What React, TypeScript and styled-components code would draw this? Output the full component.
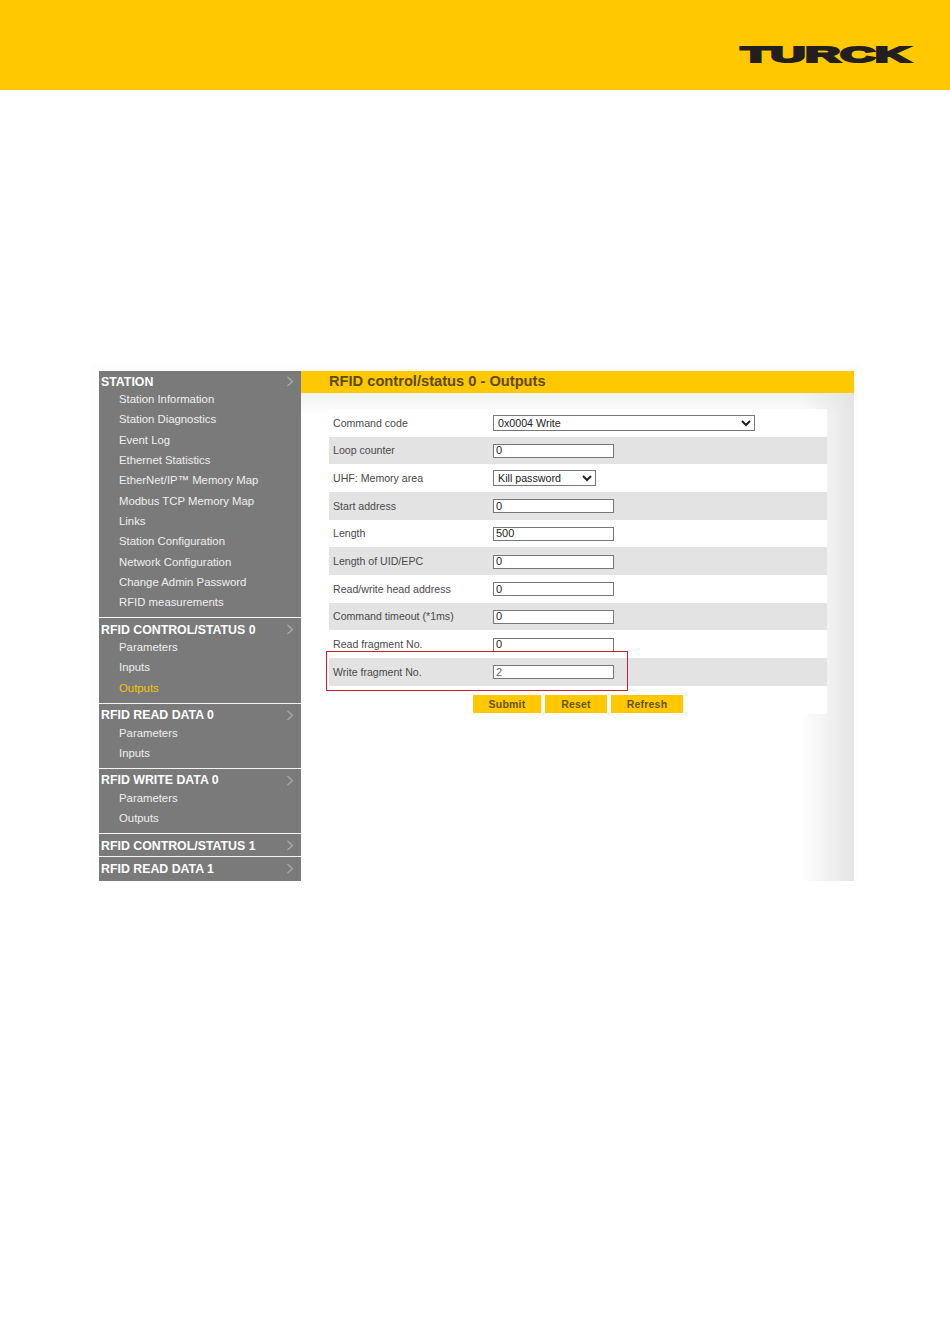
import React from "react";
import styled, { createGlobalStyle } from "styled-components";

const GlobalStyle = createGlobalStyle`
  html, body {
    margin: 0;
    padding: 0;
    background: #fff;
    font-family: "Liberation Sans", Arial, sans-serif;
  }
`;

const PageHeader = styled.header`
  height: 90px;
  background: #ffc800;
  display: flex;
  justify-content: flex-end;
  align-items: flex-start;
  padding: 44px 36px 0 0;
  box-sizing: border-box;
`;

const Logo = styled.svg`
  width: 176px;
  height: 22px;
  display: block;
  overflow: visible;
`;

const Figure = styled.div`
  width: 768px;
  height: 518px;
  margin: 273px 0 0 91px;
  padding: 8px 5px 0 8px;
  box-sizing: border-box;
  background: #fdfdfd;
  display: flex;
`;

const Sidebar = styled.nav`
  width: 202px;
  flex: none;
  display: flex;
  flex-direction: column;
`;

const Section = styled.div<{ $first?: boolean }>`
  background: #7a7a7a;
  border-bottom: 1px solid #f4f4f4;
  padding-top: ${(p) => (p.$first ? 0.5 : 1.5)}px;
  &:last-child {
    border-bottom: none;
    flex: 1;
  }
`;

const SectionHead = styled.div`
  height: 20px;
  padding: 0 7px 0 2px;
  display: flex;
  align-items: center;
  justify-content: space-between;
  color: #fff;
  font-size: 12.35px;
  font-weight: bold;
`;

const Chevron = styled.svg`
  width: 8px;
  height: 11px;
  fill: none;
  stroke: #a9a9a9;
  stroke-width: 1.3;
`;

const ItemList = styled.ul<{ $first?: boolean }>`
  list-style: none;
  margin: -2.5px 0 0;
  padding: 0 0 ${(p) => (p.$first ? 4.3 : 4.6)}px 20px;
`;

const Item = styled.li<{ $active?: boolean }>`
  height: 20.35px;
  line-height: 20.35px;
  font-size: 11.35px;
  color: ${(p) => (p.$active ? "#f5c400" : "#efefef")};
`;

const CollapsedGap = styled.div`
  height: 0.5px;
`;

const Content = styled.main`
  flex: 1;
  display: flex;
  flex-direction: column;
`;

const TitleBar = styled.h1`
  margin: 0;
  height: 22px;
  line-height: 21px;
  padding-left: 28px;
  background: #ffc800;
  color: #5c4a12;
  font-size: 14.67px;
  font-weight: bold;
`;

const ContentBody = styled.div`
  flex: 1;
  padding: 16px 0 0 28px;
  background:
    linear-gradient(to right, rgba(228, 228, 228, 0) 500px, #e4e4e4 100%),
    linear-gradient(to bottom, #f1f1f1, #ffffff 22px);
`;

const FormPanel = styled.form`
  position: relative;
  width: 498px;
  background: #fff;
`;

const FormRow = styled.div<{ $shaded: boolean }>`
  height: 27.67px;
  padding-left: 4px;
  display: grid;
  grid-template-columns: 160px 1fr;
  align-items: center;
  background: ${(p) => (p.$shaded ? "#e3e3e3" : "#fff")};
`;

const Label = styled.label`
  font-size: 10.6px;
  color: #4a4a4a;
`;

const FieldCell = styled.div`
  display: flex;
  align-items: center;
`;

const TextInput = styled.input<{ $muted?: boolean }>`
  width: 121px;
  height: 14px;
  box-sizing: border-box;
  margin: 1px 0 0;
  padding: 0 2px 1px;
  border: 1px solid #777;
  border-radius: 0;
  outline: none;
  background: #fff;
  font-family: inherit;
  font-size: 11px;
  color: ${(p) => (p.$muted ? "#666" : "#222")};
`;

const Select = styled.select<{ $wide?: boolean }>`
  width: ${(p) => (p.$wide ? 262 : 103)}px;
  height: 16px;
  box-sizing: border-box;
  margin: 0 0 ${(p) => (p.$wide ? 0 : 1)}px;
  padding: 0 0 1px;
  border: 1px solid #777;
  border-radius: 0;
  background: #fff;
  font-family: inherit;
  font-size: 10.7px;
  color: #222;
`;

const ButtonRow = styled.div`
  height: 28px;
  padding: 9px 0 0 144px;
  box-sizing: border-box;
  display: flex;
  gap: 4px;
`;

const ActionButton = styled.button<{ $width: number }>`
  width: ${(p) => p.$width}px;
  height: 18px;
  padding: 0;
  border: none;
  background: #ffc800;
  color: #66551a;
  font-family: inherit;
  font-size: 10.5px;
  font-weight: bold;
  letter-spacing: 0.2px;
`;

const Highlight = styled.div`
  position: absolute;
  left: -3px;
  top: 242px;
  width: 302px;
  height: 40px;
  box-sizing: border-box;
  border: 1px solid #c8202f;
  pointer-events: none;
`;

type NavSection = { title: string; items: string[]; active?: string };

const nav: NavSection[] = [
  {
    title: "STATION",
    items: [
      "Station Information",
      "Station Diagnostics",
      "Event Log",
      "Ethernet Statistics",
      "EtherNet/IP™ Memory Map",
      "Modbus TCP Memory Map",
      "Links",
      "Station Configuration",
      "Network Configuration",
      "Change Admin Password",
      "RFID measurements",
    ],
  },
  { title: "RFID CONTROL/STATUS 0", items: ["Parameters", "Inputs", "Outputs"], active: "Outputs" },
  { title: "RFID READ DATA 0", items: ["Parameters", "Inputs"] },
  { title: "RFID WRITE DATA 0", items: ["Parameters", "Outputs"] },
  { title: "RFID CONTROL/STATUS 1", items: [] },
  { title: "RFID READ DATA 1", items: [] },
];

type Field = { label: string; value: string; options?: string[]; wide?: boolean; muted?: boolean };

const fields: Field[] = [
  { label: "Command code", value: "0x0004 Write", options: ["0x0004 Write"], wide: true },
  { label: "Loop counter", value: "0" },
  { label: "UHF: Memory area", value: "Kill password", options: ["Kill password"] },
  { label: "Start address", value: "0" },
  { label: "Length", value: "500" },
  { label: "Length of UID/EPC", value: "0" },
  { label: "Read/write head address", value: "0" },
  { label: "Command timeout (*1ms)", value: "0" },
  { label: "Read fragment No.", value: "0" },
  { label: "Write fragment No.", value: "2", muted: true },
];

const App: React.FC = (): JSX.Element => {
  return (
    <>
      <GlobalStyle />
      <PageHeader>
        <Logo viewBox="0 0 176 22">
          <text
            x="3"
            y="18"
            textLength="169"
            lengthAdjust="spacingAndGlyphs"
            fontFamily="'Liberation Sans', Arial, sans-serif"
            fontWeight="bold"
            fontSize="21.5"
            fill="#231f20"
            stroke="#231f20"
            strokeWidth="2"
          >
            TURCK
          </text>
        </Logo>
      </PageHeader>
      <Figure>
        <Sidebar>
          {nav.map((section, i) => (
            <Section key={section.title} $first={i === 0}>
              <SectionHead>
                {section.title}
                <Chevron viewBox="0 0 8 11">
                  <path d="M1.5 1l5 4.5-5 4.5" />
                </Chevron>
              </SectionHead>
              {section.items.length > 0 ? (
                <ItemList $first={i === 0}>
                  {section.items.map((item) => (
                    <Item key={item} $active={item === section.active}>
                      {item}
                    </Item>
                  ))}
                </ItemList>
              ) : (
                <CollapsedGap />
              )}
            </Section>
          ))}
        </Sidebar>
        <Content>
          <TitleBar>RFID control/status 0 - Outputs</TitleBar>
          <ContentBody>
            <FormPanel>
              {fields.map((field, i) => (
                <FormRow key={field.label} $shaded={i % 2 === 1}>
                  <Label>{field.label}</Label>
                  <FieldCell>
                    {field.options ? (
                      <Select $wide={field.wide} defaultValue={field.value}>
                        {field.options.map((o) => (
                          <option key={o}>{o}</option>
                        ))}
                      </Select>
                    ) : (
                      <TextInput $muted={field.muted} defaultValue={field.value} />
                    )}
                  </FieldCell>
                </FormRow>
              ))}
              <ButtonRow>
                <ActionButton type="button" $width={68}>Submit</ActionButton>
                <ActionButton type="button" $width={62}>Reset</ActionButton>
                <ActionButton type="button" $width={72}>Refresh</ActionButton>
              </ButtonRow>
              <Highlight />
            </FormPanel>
          </ContentBody>
        </Content>
      </Figure>
    </>
  );
};

export default App;
